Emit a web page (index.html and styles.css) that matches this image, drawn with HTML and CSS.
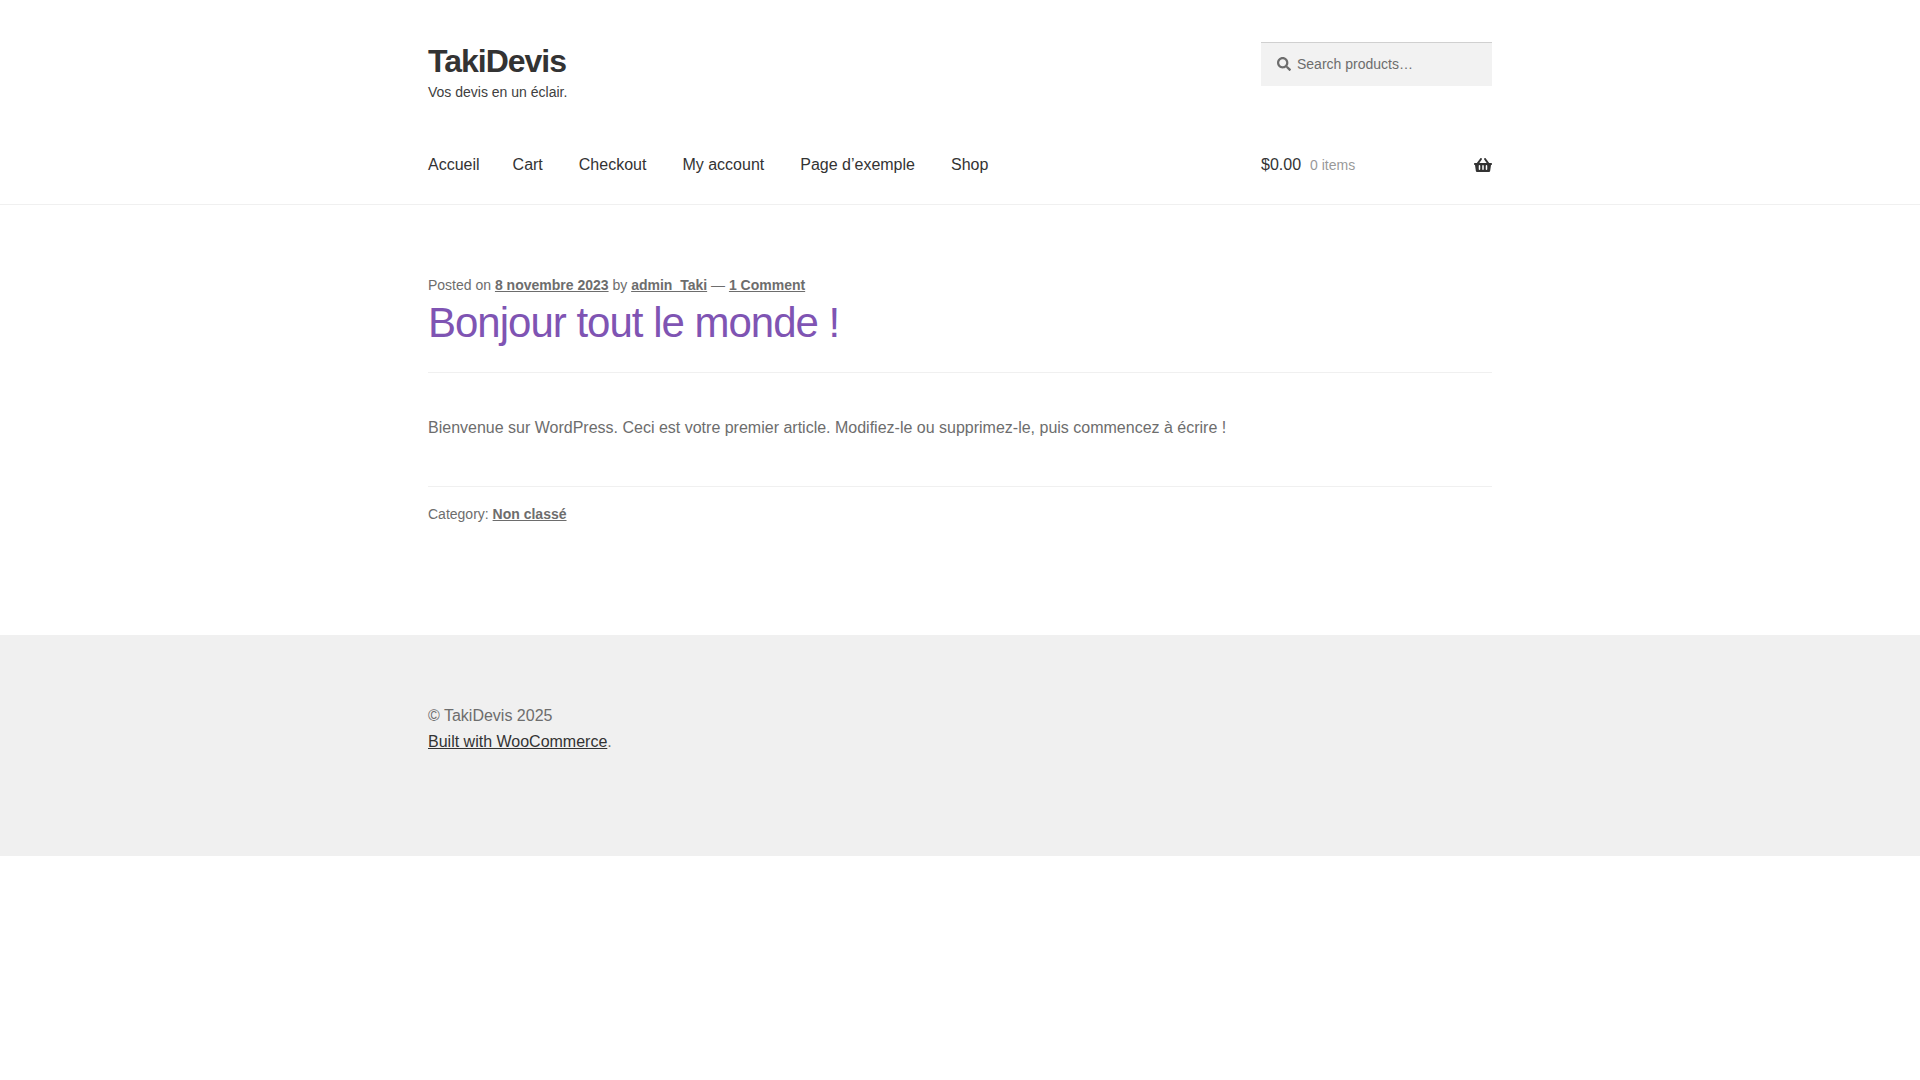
FILE: index.html
```html
<!DOCTYPE html>
<html lang="fr">
<head>
<meta charset="utf-8">
<meta name="viewport" content="width=device-width, initial-scale=1">
<title>TakiDevis</title>
<link rel="stylesheet" href="styles.css">
</head>
<body>
<header class="site-header">
  <div class="container header-top">
    <div class="branding">
      <h1 class="site-title"><a href="#">TakiDevis</a></h1>
      <p class="site-description">Vos devis en un éclair.</p>
    </div>
    <form class="search" role="search">
      <label class="search-label" for="search-field" aria-label="Search products">
        <svg class="search-icon" viewBox="0 0 512 512" aria-hidden="true"><path d="M505 442.700L405.300 343c-4.500-4.500-10.600-7-17-7H372c27.600-35.300 44-79.700 44-128C416 93.100 322.900 0 208 0S0 93.100 0 208s93.100 208 208 208c48.300 0 92.700-16.400 128-44v16.300c0 6.400 2.500 12.500 7 17l99.700 99.700c9.400 9.400 24.600 9.400 33.900 0l28.300-28.300c9.400-9.400 9.400-24.600.1-34zM208 336c-70.700 0-128-57.200-128-128 0-70.700 57.200-128 128-128 70.700 0 128 57.200 128 128 0 70.700-57.200 128-128 128z"/></svg>
      </label>
      <input class="search-field" id="search-field" type="search" placeholder="Search products…">
    </form>
  </div>
  <div class="container header-nav">
    <nav>
      <ul class="menu">
        <li><a href="#">Accueil</a></li>
        <li><a href="#">Cart</a></li>
        <li><a href="#">Checkout</a></li>
        <li><a href="#">My account</a></li>
        <li><a href="#">Page d’exemple</a></li>
        <li><a href="#">Shop</a></li>
      </ul>
    </nav>
    <a class="cart" href="#">
      <span>$0.00</span>
      <span class="cart-count">0 items</span>
      <svg class="cart-icon" viewBox="0 0 576 512" aria-hidden="true"><path d="M576 216v16c0 13.255-10.745 24-24 24h-8l-26.113 182.788C514.509 462.435 494.257 480 470.370 480H105.630c-23.887 0-44.139-17.565-47.518-41.212L32 256h-8c-13.255 0-24-10.745-24-24v-16c0-13.255 10.745-24 24-24h67.341l106.780-146.821c10.395-14.292 30.407-17.453 44.701-7.058 14.293 10.395 17.453 30.408 7.058 44.701L170.477 192h235.046L326.120 82.821c-10.395-14.292-7.234-34.306 7.059-44.701 14.291-10.395 34.306-7.235 44.701 7.058L484.659 192H552c13.255 0 24 10.745 24 24zM312 392V280c0-13.255-10.745-24-24-24s-24 10.745-24 24v112c0 13.255 10.745 24 24 24s24-10.745 24-24zm112 0V280c0-13.255-10.745-24-24-24s-24 10.745-24 24v112c0 13.255 10.745 24 24 24s24-10.745 24-24zm-224 0V280c0-13.255-10.745-24-24-24s-24 10.745-24 24v112c0 13.255 10.745 24 24 24s24-10.745 24-24z"/></svg>
    </a>
  </div>
</header>
<main class="container content">
  <article>
    <header class="entry-header">
      <p class="meta">Posted on <a href="#">8 novembre 2023</a> by <a href="#">admin_Taki</a> — <a href="#">1 Comment</a></p>
      <h2 class="entry-title"><a href="#">Bonjour tout le monde !</a></h2>
    </header>
    <p class="entry-text">Bienvenue sur WordPress. Ceci est votre premier article. Modifiez-le ou supprimez-le, puis commencez à écrire !</p>
    <footer class="entry-footer">
      <p class="meta">Category: <a href="#">Non classé</a></p>
    </footer>
  </article>
</main>
<footer class="site-footer">
  <div class="container">
    <p>© TakiDevis 2025</p>
    <p><a href="#">Built with WooCommerce</a>.</p>
  </div>
</footer>
</body>
</html>
```
FILE: styles.css
```css
*,
*::before,
*::after {
  box-sizing: border-box;
}

body {
  margin: 0;
  background: #fff;
  color: #6d6d6d;
  font: 16px/26px "Liberation Sans", Arial, sans-serif;
}

h1,
h2,
p,
ul {
  margin: 0;
  padding: 0;
}

.container {
  width: 100%;
  max-width: 1112px;
  margin: 0 auto;
  padding: 0 24px;
}

/* Header */
.site-header {
  padding: 42px 0 26px;
  border-bottom: 1px solid #f0f0f0;
  color: #404040;
}

.header-top,
.header-nav {
  display: flex;
  justify-content: space-between;
  gap: 24px;
}

.header-top {
  align-items: flex-start;
  margin-bottom: 49px;
}

.site-title {
  font-size: 32px;
  line-height: 39px;
  letter-spacing: -1px;
}

.site-title a {
  color: #333;
  text-decoration: none;
}

.site-description {
  font-size: 14px;
  line-height: 22px;
}

.search {
  display: flex;
  align-items: center;
  width: 231px;
  height: 44px;
  padding-left: 16px;
  background: #f2f2f2;
  box-shadow: inset 0 1px 0 #d0d0d0;
  color: #6d6d6d;
}

.search-label {
  display: flex;
}

.search-icon {
  width: 14px;
  height: 14px;
  fill: currentColor;
}

.search-field {
  flex: 1;
  min-width: 0;
  height: 100%;
  padding: 0 8px 0 6px;
  border: 0;
  background: none;
  color: #43454b;
  font: inherit;
  font-size: 14px;
  appearance: none;
}

.search-field::placeholder {
  color: #6d6d6d;
}

.header-nav {
  align-items: center;
}

.menu {
  display: flex;
  flex-wrap: wrap;
  gap: 0 36px;
  list-style: none;
}

.menu li:first-child {
  margin-right: -3px;
}

.menu a {
  display: block;
  color: #333;
  text-decoration: none;
}

.cart {
  display: flex;
  align-items: center;
  gap: 9px;
  width: 231px;
  color: #333;
  text-decoration: none;
}

.cart-count {
  font-size: 14px;
  opacity: 0.5;
}

.cart-icon {
  width: 18px;
  height: 16px;
  margin-left: auto;
  fill: currentColor;
}

/* Article */
.content {
  padding-top: 68px;
  padding-bottom: 109px;
}

.entry-header {
  margin-bottom: 42px;
  padding-bottom: 24px;
  border-bottom: 1px solid #f0f0f0;
}

.meta {
  font-size: 14px;
  line-height: 24px;
}

.meta a {
  color: #6d6d6d;
  font-weight: 700;
}

.entry-title {
  font-size: 42px;
  font-weight: 400;
  line-height: 51px;
  letter-spacing: -1px;
}

.entry-title a {
  color: #7f54b3;
  text-decoration: none;
}

.entry-text {
  margin-bottom: 45px;
}

.entry-footer {
  padding-top: 15px;
  border-top: 1px solid #f0f0f0;
}

/* Footer */
.site-footer {
  padding: 68px 0 101px;
  background: #f0f0f0;
}

.site-footer a {
  color: #333;
}
```
